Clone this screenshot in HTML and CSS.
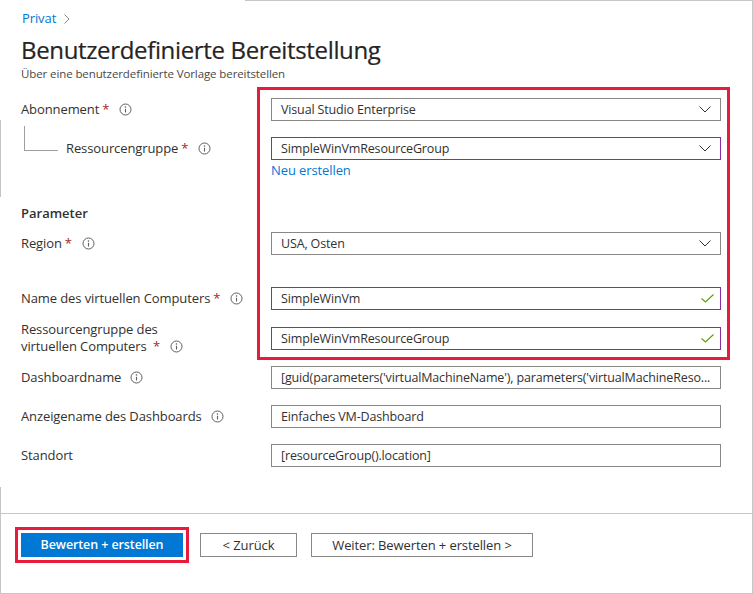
FILE: index.html
```html
<!DOCTYPE html>
<html lang="de">
<head>
<meta charset="utf-8">
<title>Benutzerdefinierte Bereitstellung</title>
<link rel="stylesheet" href="styles.css">
</head>
<body>
<div class="frame">
  <span class="edge edge-a"></span>
  <span class="edge edge-b"></span>
  <main class="content">
    <nav class="crumbs">
      <a class="crumb">Privat</a>
      <svg class="crumb-chev" width="6" height="10" viewBox="0 0 6 10"><polyline points="0.5,0.5 5,5 0.5,9.5" fill="none" stroke="#8a8886" stroke-width="1"/></svg>
    </nav>
    <h1 class="title">Benutzerdefinierte Bereitstellung</h1>
    <p class="subtitle">Über eine benutzerdefinierte Vorlage bereitstellen</p>

    <div class="form">
      <div class="row row-first">
        <div class="label">Abonnement <span class="req">*</span><svg class="info" width="13" height="13" viewBox="0 0 13 13"><circle cx="6.5" cy="6.5" r="5.5" fill="none" stroke="#605e5c"/><circle cx="6.5" cy="4" r="0.8" fill="#605e5c"/><line x1="6.5" y1="5.8" x2="6.5" y2="9.5" stroke="#605e5c" stroke-width="1.1"/></svg></div>
        <div class="field field-plain">Visual Studio Enterprise<svg class="chev" width="12" height="7" viewBox="0 0 12 7"><polyline points="0.5,0.5 6,6 11.5,0.5" fill="none" stroke="#323130"/></svg></div>
      </div>
      <div class="row row-gap">
        <div class="label label-child">Ressourcengruppe <span class="req">*</span><svg class="info" width="13" height="13" viewBox="0 0 13 13"><circle cx="6.5" cy="6.5" r="5.5" fill="none" stroke="#605e5c"/><circle cx="6.5" cy="4" r="0.8" fill="#605e5c"/><line x1="6.5" y1="5.8" x2="6.5" y2="9.5" stroke="#605e5c" stroke-width="1.1"/></svg></div>
        <div class="field field-mod">SimpleWinVmResourceGroup<svg class="chev" width="12" height="7" viewBox="0 0 12 7"><polyline points="0.5,0.5 6,6 11.5,0.5" fill="none" stroke="#323130"/></svg></div>
      </div>
      <div class="row row-link">
        <div class="label"></div>
        <a class="link">Neu erstellen</a>
      </div>

      <h2 class="section">Parameter</h2>

      <div class="row row-region">
        <div class="label">Region <span class="req">*</span><svg class="info" width="13" height="13" viewBox="0 0 13 13"><circle cx="6.5" cy="6.5" r="5.5" fill="none" stroke="#605e5c"/><circle cx="6.5" cy="4" r="0.8" fill="#605e5c"/><line x1="6.5" y1="5.8" x2="6.5" y2="9.5" stroke="#605e5c" stroke-width="1.1"/></svg></div>
        <div class="field field-plain">USA, Osten<svg class="chev" width="12" height="7" viewBox="0 0 12 7"><polyline points="0.5,0.5 6,6 11.5,0.5" fill="none" stroke="#323130"/></svg></div>
      </div>
      <div class="row row-name">
        <div class="label">Name des virtuellen Computers <span class="req">*</span><svg class="info" width="13" height="13" viewBox="0 0 13 13"><circle cx="6.5" cy="6.5" r="5.5" fill="none" stroke="#605e5c"/><circle cx="6.5" cy="4" r="0.8" fill="#605e5c"/><line x1="6.5" y1="5.8" x2="6.5" y2="9.5" stroke="#605e5c" stroke-width="1.1"/></svg></div>
        <div class="field field-mod">SimpleWinVm<svg class="check" width="13" height="9" viewBox="0 0 13 9"><polyline points="0.5,4.5 4.5,8 12.5,0.5" fill="none" stroke="#57a300" stroke-width="1.1"/></svg></div>
      </div>
      <div class="row row-small">
        <div class="label label-multi">Ressourcengruppe des<br>virtuellen Computers <span class="req">*</span><svg class="info" width="13" height="13" viewBox="0 0 13 13"><circle cx="6.5" cy="6.5" r="5.5" fill="none" stroke="#605e5c"/><circle cx="6.5" cy="4" r="0.8" fill="#605e5c"/><line x1="6.5" y1="5.8" x2="6.5" y2="9.5" stroke="#605e5c" stroke-width="1.1"/></svg></div>
        <div class="field field-mod">SimpleWinVmResourceGroup<svg class="check" width="13" height="9" viewBox="0 0 13 9"><polyline points="0.5,4.5 4.5,8 12.5,0.5" fill="none" stroke="#57a300" stroke-width="1.1"/></svg></div>
      </div>
      <div class="row row-small">
        <div class="label">Dashboardname<svg class="info info-plain" width="13" height="13" viewBox="0 0 13 13"><circle cx="6.5" cy="6.5" r="5.5" fill="none" stroke="#605e5c"/><circle cx="6.5" cy="4" r="0.8" fill="#605e5c"/><line x1="6.5" y1="5.8" x2="6.5" y2="9.5" stroke="#605e5c" stroke-width="1.1"/></svg></div>
        <div class="field field-plain"><span class="ellipsis">[guid(parameters('virtualMachineName'), parameters('virtualMachineReso...</span></div>
      </div>
      <div class="row row-gap">
        <div class="label">Anzeigename des Dashboards<svg class="info info-plain" width="13" height="13" viewBox="0 0 13 13"><circle cx="6.5" cy="6.5" r="5.5" fill="none" stroke="#605e5c"/><circle cx="6.5" cy="4" r="0.8" fill="#605e5c"/><line x1="6.5" y1="5.8" x2="6.5" y2="9.5" stroke="#605e5c" stroke-width="1.1"/></svg></div>
        <div class="field field-plain">Einfaches VM-Dashboard</div>
      </div>
      <div class="row row-gap">
        <div class="label">Standort</div>
        <div class="field field-plain">[resourceGroup().location]</div>
      </div>
    </div>
  </main>
  <footer class="footer">
    <button class="btn btn-primary">Bewerten + erstellen</button>
    <button class="btn btn-back">&lt; Zurück</button>
    <button class="btn btn-next">Weiter: Bewerten + erstellen &gt;</button>
  </footer>
  <div class="annot"></div>
</div>
</body>
</html>
```

FILE: styles.css
```css
* { box-sizing: border-box; margin: 0; padding: 0; }

body {
  margin: 0;
  background: #fff;
  color: #323130;
  font-family: "Open Sans", "Noto Sans", sans-serif;
  font-size: 13px;
}

.frame {
  position: relative;
  width: 753px;
  height: 594px;
  border-right: 1px solid #c6c6c6;
  border-bottom: 1px solid #c6c6c6;
  display: flex;
  flex-direction: column;
}

.frame::before {
  content: "";
  position: absolute;
  left: 245px;
  right: 0;
  top: 0;
  height: 1px;
  background: #c6c6c6;
}

.edge {
  position: absolute;
  left: 0;
  width: 1px;
  background: #c6c6c6;
}
.edge-a { top: 120px; height: 77px; }
.edge-b { top: 487px; bottom: 0; }

.content {
  flex: 0 0 513px;
  padding: 9px 0 0 21px;
}

.crumbs {
  display: flex;
  align-items: center;
  gap: 8px;
  height: 18px;
  line-height: 18px;
  padding-left: 1px;
}
.crumb { color: #0078d4; font-size: 13px; letter-spacing: -0.1px; }
.crumb-chev { display: block; margin-top: 1px; }

.title {
  margin-top: 7px;
  font-size: 24px;
  line-height: 32px;
  font-weight: 400;
  color: #252423;
  letter-spacing: -0.35px;
  -webkit-text-stroke: 0.2px #252423;
}

.subtitle {
  font-size: 11.5px;
  line-height: 16px;
  color: #4a4846;
  letter-spacing: -0.1px;
}

.form { margin-top: 16px; }

.row {
  display: grid;
  grid-template-columns: 250px 450px;
  align-items: center;
}
.row-gap { margin-top: 16px; }
.row-link { margin-top: 1px; }
.row-region { margin-top: 10px; }
.row-name { margin-top: 32px; }
.row-small { margin-top: 11px; }

.label {
  position: relative;
  display: flex;
  align-items: center;
  line-height: 17px;
  font-size: 13px;
  letter-spacing: -0.1px;
  color: #323130;
}
.label-multi { display: block; }
.label-multi .info { vertical-align: -2px; }

.label-child { padding-left: 45px; }
.label-child::before {
  content: "";
  position: absolute;
  left: 3px;
  top: -14px;
  width: 33px;
  height: 24px;
  border-left: 1px solid #a19f9d;
  border-bottom: 1px solid #a19f9d;
}

.req { color: #a4262c; margin-left: 3px; }
.info { margin-left: 10px; flex: none; }
.info-plain { margin-left: 9px; }

.field {
  position: relative;
  display: flex;
  align-items: center;
  height: 23px;
  padding: 0 8px 0 9px;
  border: 1px solid #8a8886;
  font-size: 12.5px;
  letter-spacing: -0.15px;
  color: #323130;
  white-space: nowrap;
}
.field-mod { border-color: #8a2da5; }

.chev { margin-left: auto; margin-right: 1px; flex: none; }
.check { margin-left: auto; margin-right: -2px; flex: none; }

.ellipsis {
  overflow: hidden;
  text-overflow: ellipsis;
  white-space: nowrap;
}

.link {
  color: #0078d4;
  font-size: 13px;
  letter-spacing: -0.1px;
  line-height: 18px;
}

.section {
  margin-top: 25px;
  font-size: 13px;
  line-height: 18px;
  font-weight: 600;
  color: #323130;
}

.footer {
  flex: 1;
  border-top: 1px solid #c6c6c6;
  padding: 19px 0 0 21px;
  display: flex;
  align-items: flex-start;
}

.btn {
  height: 24px;
  font-family: inherit;
  font-size: 13px;
  line-height: 22px;
  background: #fff;
  color: #323130;
  border: 1px solid #8a8886;
  white-space: nowrap;
  letter-spacing: -0.1px;
}

.btn-primary {
  width: 162px;
  background: #0078d4;
  border-color: #0078d4;
  color: #fff;
  font-weight: 600;
  font-size: 12.5px;
  outline: 3px solid #e81b3c;
  outline-offset: 3px;
}
.btn-back { width: 97px; margin-left: 17px; }
.btn-next { width: 222px; margin-left: 14px; }

.annot {
  position: absolute;
  left: 257px;
  top: 87px;
  width: 473px;
  height: 273px;
  border: 3px solid #e81b3c;
  pointer-events: none;
}
```
